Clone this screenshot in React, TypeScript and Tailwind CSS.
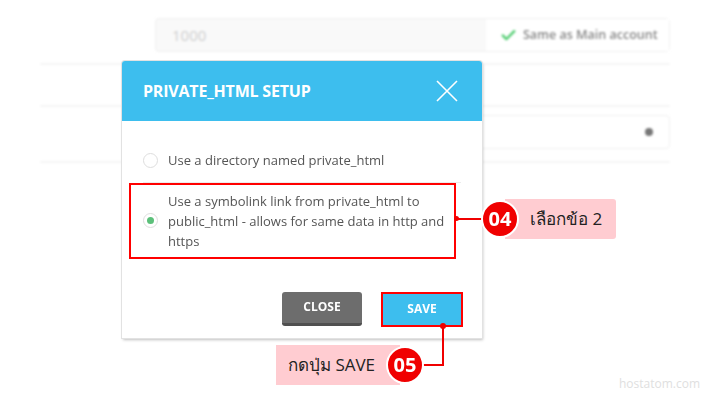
import { Check } from "lucide-react";

function Background() {
  return (
    <div className="blur-[1px]">
      <div className="ml-[40px] w-[630px] pt-[18px]">
        <div className="ml-[115px] flex h-[34px] rounded border border-[#f0f0f0] bg-[#f9f9f9]">
          <div className="flex flex-1 items-center pl-[16px] text-[15px] text-[#cfcfcf]">1000</div>
          <div className="flex w-[183px] items-center gap-[6px] bg-white pl-[14px] text-[12.5px] font-semibold text-[#888]">
            <Check className="h-[17px] w-[17px] text-[#5cd07a]" strokeWidth={3.5} />
            <span>Same as Main account</span>
          </div>
        </div>
        <div className="mt-[11px] h-[2px] bg-[#f6f6f6]" />
        <div className="mt-[40px] h-[2px] bg-[#f6f6f6]" />
        <div className="ml-[115px] mt-[8px] flex h-[34px] items-center justify-end rounded border border-[#f0f0f0] bg-white pr-[16px]">
          <div className="h-[8px] w-[8px] rounded-full bg-[#777]" />
        </div>
        <div className="mt-[12px] h-[2px] bg-[#f6f6f6]" />
      </div>
    </div>
  );
}

function Radio({ checked }: { checked?: boolean }) {
  return (
    <div className="flex h-[15px] w-[15px] shrink-0 items-center justify-center rounded-full border border-[#ddd] bg-white">
      {checked && <div className="h-[7px] w-[7px] rounded-full bg-[#5cc07a]" />}
    </div>
  );
}

function Badge({ n }: { n: string }) {
  return (
    <div className="relative z-10 flex h-[38px] w-[38px] items-center justify-center rounded-full border-[2px] border-white bg-[#f00000] text-[20px] font-bold text-white">
      {n}
    </div>
  );
}

export default function App() {
  return (
    <div
      className="relative h-[400px] w-[720px] overflow-hidden bg-white"
      style={{ fontFamily: '"Open Sans", "Noto Sans", sans-serif' }}
    >
      <Background />

      {/* modal */}
      <div className="absolute left-[122px] top-[61px] w-[360px] overflow-hidden rounded-t-[3px] bg-white shadow-[1px_2px_3px_rgba(0,0,0,0.25)] ring-1 ring-[#e2e2e2]">
        <div className="flex h-[60px] items-center justify-between bg-[#3dbeee] pl-[21px] pr-[24px]">
          <span className="text-[16px] font-bold tracking-[-0.2px] text-white">PRIVATE_HTML SETUP</span>
          <svg width="22" height="22" viewBox="0 0 22 22" className="text-white">
            <path d="M1 1 L21 21 M21 1 L1 21" stroke="currentColor" strokeWidth="1.6" />
          </svg>
        </div>
        <div className="px-[21px] pt-[30px]">
          <div className="flex items-center gap-[10px] pb-[11px] text-[13px] text-[#555]">
            <Radio />
            <span>Use a directory named private_html</span>
          </div>
          <div className="h-px bg-[#ececec]" />
          <div className="-mx-[14px] flex h-[76px] w-[327px] items-center gap-[10px] border-[2px] border-[#ff0000] pl-[12px] pr-[4px] text-[13px] leading-[20px] text-[#555]">
            <Radio checked />
            <span>Use a symbolink link from private_html to public_html - allows for same data in http and https</span>
          </div>
          <div className="flex justify-end gap-[19px] pb-[11px] pt-[33px]">
            <button className="h-[34px] w-[80px] rounded-[3px] border-b-[3px] border-[#505050] bg-[#6d6d6d] text-[12px] font-bold text-white">
              CLOSE
            </button>
            <button className="mr-[-2px] h-[35px] w-[82px] border-[2px] border-[#ff0000] bg-[#3dbeee] text-[12px] font-bold text-white">
              SAVE
            </button>
          </div>
        </div>
      </div>

      {/* callout 04 */}
      <div className="absolute left-[454px] top-[216px] h-[5px] w-[5px] rounded-full bg-[#f00000]" />
      <div className="absolute left-[456px] top-[218px] h-[2px] w-[30px] bg-[#f00000]" />
      <div className="absolute left-[481px] top-[199px] flex items-center">
        <Badge n="04" />
        <div className="-ml-[14px] flex h-[40px] w-[111px] items-center rounded-r-[3px] bg-[#ffccd1] pl-[25px] text-[17px] text-[#222]">
          เลือกข้อ 2
        </div>
      </div>

      {/* callout 05 */}
      <div className="absolute left-[440px] top-[323px] h-[6px] w-[6px] rounded-full bg-[#f00000]" />
      <div className="absolute left-[442px] top-[326px] h-[40px] w-[2px] bg-[#f00000]" />
      <div className="absolute left-[420px] top-[364px] h-[2px] w-[24px] bg-[#f00000]" />
      <div className="absolute left-[276px] top-[345px] flex items-center">
        <div className="-mr-[14px] flex h-[40px] w-[124px] items-center bg-[#ffccd1] pl-[12px] text-[17px] text-[#222]">
          กดปุ่ม SAVE
        </div>
        <Badge n="05" />
      </div>

      <div className="absolute left-[619px] top-[375px] text-[12px] text-[#e0e0e0]">hostatom.com</div>
    </div>
  );
}
